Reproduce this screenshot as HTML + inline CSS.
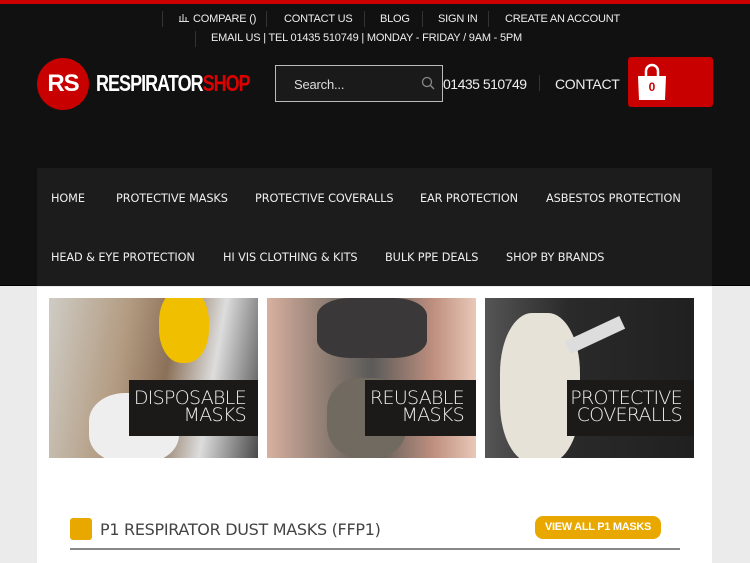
<!DOCTYPE html>
<html><head><style>
*{margin:0;padding:0;box-sizing:border-box}
body{width:750px;height:563px;overflow:hidden;background:#ebebeb;font-family:"Liberation Sans",sans-serif;position:relative}
.hdr{position:absolute;left:0;top:0;width:750px;height:286px;background:#111;border-top:4px solid #c00;border-bottom:1px solid #000}
.t{position:absolute;color:#eee;font-size:11px;white-space:nowrap;letter-spacing:-.2px}
.sep{position:absolute;width:1px;height:16px;background:#333}
.nav{position:absolute;left:37px;top:168px;width:675px;height:118px;background:#1c1c1c}
.nav span{position:absolute;color:#eee;font-family:"DejaVu Sans",sans-serif;font-size:11.3px;letter-spacing:-.1px;white-space:nowrap}
.main{position:absolute;left:37px;top:287px;width:675px;height:276px;background:#fff}
.img{position:absolute;top:298px;width:209px;height:160px;overflow:hidden}
.lbl{position:absolute;right:0;background:#1b1a19;color:#eee;font-size:19px;line-height:17px;text-align:right;padding:10px 12px 0 0;font-family:"DejaVu Sans",sans-serif;font-weight:200;letter-spacing:-.7px}
</style></head><body>
<div class="hdr"></div>
<div class="sep" style="left:162px;top:11px"></div>
<svg style="position:absolute;left:179px;top:13px" width="10" height="9"><path d="M1 8V3M4 8V1M7 8V4M0 8.5H10" stroke="#ddd" fill="none"/></svg>
<div class="t" style="left:193px;top:13px">COMPARE ()</div>
<div class="sep" style="left:266px;top:11px"></div>
<div class="t" style="left:284px;top:13px">CONTACT US</div>
<div class="sep" style="left:364px;top:11px"></div>
<div class="t" style="left:380px;top:13px">BLOG</div>
<div class="sep" style="left:422px;top:11px"></div>
<div class="t" style="left:438px;top:13px">SIGN IN</div>
<div class="sep" style="left:488px;top:11px"></div>
<div class="t" style="left:505px;top:13px">CREATE AN ACCOUNT</div>
<div class="sep" style="left:195px;top:31px"></div>
<div class="t" style="left:211px;top:32px">EMAIL US | TEL 01435 510749 | MONDAY - FRIDAY / 9AM - 5PM</div>
<div style="position:absolute;left:37px;top:58px;width:52px;height:52px;border-radius:50%;background:#c80000;color:#fff;font-weight:bold;font-size:24px;line-height:52px;text-align:center;letter-spacing:-1px">RS</div>
<div style="position:absolute;left:96px;top:70px;font-size:23px;font-weight:bold;color:#fff;letter-spacing:-1.2px;transform:scaleX(.78);transform-origin:left">RESPIRATOR<span style="color:#d00">SHOP</span></div>
<div style="position:absolute;left:275px;top:65px;width:168px;height:37px;border:1px solid #bbb;background:#1a1a1a"></div>
<div class="t" style="left:294px;top:77px;font-size:13px;color:#ddd">Search...</div>
<svg style="position:absolute;left:421px;top:76px" width="14" height="14"><circle cx="6" cy="6" r="4.5" stroke="#888" fill="none" stroke-width="1.3"/><path d="M9.5 9.5L13 13" stroke="#888" stroke-width="1.4"/></svg>
<div class="t" style="left:443px;top:76px;font-size:14px;letter-spacing:-.5px">01435 510749</div>
<div class="sep" style="left:539px;top:75px;height:16px"></div>
<div class="t" style="left:555px;top:76px;font-size:14px;letter-spacing:-.3px">CONTACT</div>
<div style="position:absolute;left:628px;top:57px;width:85px;height:50px;background:#c80000;border-radius:3px"></div>
<svg style="position:absolute;left:635px;top:62px" width="34" height="40"><path d="M11 14V9a6 6 0 0 1 12 0v5" stroke="#fff" stroke-width="2.5" fill="none"/><path d="M3 14H31L30 38H4Z" fill="#fff"/><text x="17" y="29" font-size="12" font-weight="bold" fill="#c00" text-anchor="middle" font-family="Liberation Sans">0</text></svg>
<div class="nav">
<span style="left:14px;top:24px">HOME</span>
<span style="left:79px;top:24px">PROTECTIVE MASKS</span>
<span style="left:218px;top:24px">PROTECTIVE COVERALLS</span>
<span style="left:383px;top:24px">EAR PROTECTION</span>
<span style="left:509px;top:24px">ASBESTOS PROTECTION</span>
<span style="left:14px;top:83px">HEAD &amp; EYE PROTECTION</span>
<span style="left:186px;top:83px">HI VIS CLOTHING &amp; KITS</span>
<span style="left:348px;top:83px">BULK PPE DEALS</span>
<span style="left:469px;top:83px">SHOP BY BRANDS</span>
</div>
<div class="main"></div>
<div class="img" style="left:49px;background:linear-gradient(100deg,#cfccc5 0%,#b29a80 35%,#8a7058 55%,#ddd 75%,#4a4a4a 100%)">
<div style="position:absolute;left:110px;top:-10px;width:50px;height:75px;border-radius:45%;background:#f0c000"></div>
<div style="position:absolute;left:40px;top:95px;width:90px;height:70px;border-radius:40%;background:#eee"></div>
<div class="lbl" style="top:82px;width:129px;height:56px">DISPOSABLE<br>MASKS</div></div>
<div class="img" style="left:267px;background:linear-gradient(90deg,#d8b0a0 0%,#8a7a70 30%,#5a5a58 50%,#c09080 80%,#e8c8b8 100%)">
<div style="position:absolute;left:50px;top:0;width:110px;height:60px;border-radius:30%;background:#3a3838"></div>
<div style="position:absolute;left:60px;top:80px;width:80px;height:80px;border-radius:40%;background:#706a60"></div>
<div class="lbl" style="top:82px;width:111px;height:56px">REUSABLE<br>MASKS</div></div>
<div class="img" style="left:485px;background:linear-gradient(90deg,#555 0%,#2a2a2a 40%,#202020 100%)">
<div style="position:absolute;left:15px;top:15px;width:80px;height:150px;border-radius:40%;background:#e6e2d8"></div>
<div style="position:absolute;left:80px;top:30px;width:60px;height:14px;background:#ddd;transform:rotate(-25deg)"></div>
<div class="lbl" style="top:82px;width:127px;height:56px">PROTECTIVE<br>COVERALLS</div></div>
<div style="position:absolute;left:70px;top:518px;width:22px;height:22px;background:#e8a800;border-radius:3px"></div>
<div style="position:absolute;left:100px;top:520px;color:#444;font-family:'DejaVu Sans',sans-serif;font-size:16px;letter-spacing:-.3px">P1 RESPIRATOR DUST MASKS (FFP1)</div>
<div style="position:absolute;left:535px;top:516px;width:126px;height:23px;background:#e8a800;border-radius:8px;color:#fff;font-size:11px;font-weight:bold;text-align:center;line-height:23px;letter-spacing:-.3px">VIEW ALL P1 MASKS</div>
<div style="position:absolute;left:70px;top:548px;width:610px;height:2px;background:#888"></div>
</body></html>
